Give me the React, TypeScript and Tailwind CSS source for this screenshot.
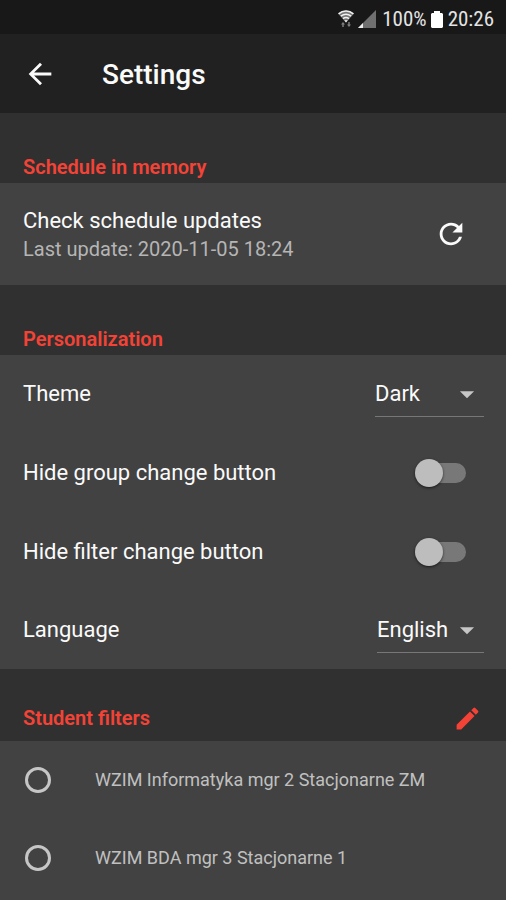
import { ReactNode, useState } from "react";
import { MdArrowBack, MdArrowDropDown, MdEdit, MdRefresh } from "react-icons/md";

const FILTERS = [
  "WZIM Informatyka mgr 2 Stacjonarne ZM",
  "WZIM BDA mgr 3 Stacjonarne 1",
];

function StatusBar() {
  return (
    <div className="flex h-[34px] items-center justify-end bg-[#181818] pr-3 pt-1 font-['Roboto_Condensed','Roboto',sans-serif] text-[21px] leading-6 text-[#e4e4e4]">
      <svg className="mr-1 h-[18px] w-4" viewBox="0 0 16 18" aria-hidden="true">
        <path d="M0 3.500C4.500-.6 11.500-.6 16 3.500L8 12.500z" fill="#777" />
        <g fill="none" stroke="#f0f0f0" strokeWidth="1.500">
          <path d="M.6 3.800C5 .2 11 .2 15.400 3.800" />
          <path d="M2.800 6.200C6 3.700 10 3.700 13.200 6.200" />
          <path d="M5 8.700C7 7.200 9 7.200 11 8.700" />
        </g>
        <path d="M6.200 10.200h3.600L8 12.500z" fill="#f0f0f0" />
        <path d="M3 14.500l2-2.500 2 2.500H5.700V17H4.300v-2.500zM13 14.500L11 17l-2-2.500h1.300V12h1.400v2.500z" fill="#808080" />
      </svg>
      <svg className="mr-1.5 h-[18px] w-[18px]" viewBox="0 0 18 18" aria-hidden="true">
        <path d="M18 0v18H0z" fill="#707070" />
        <path d="M5 13v5H0z" fill="#f0f0f0" />
      </svg>
      <span>100%</span>
      <svg className="ml-1 mr-[5px] h-[17px] w-3" viewBox="0 0 12 17" aria-hidden="true">
        <path d="M3 0h6v2h2l1 1v13l-1 1H1l-1-1V3l1-1h2z" fill="#fff" />
      </svg>
      <span>20:26</span>
    </div>
  );
}

function SectionTitle({ title }: { title: string }) {
  return <h2 className="text-[20px] font-semibold leading-6 text-[#f44336]">{title}</h2>;
}

function SectionHeader({ children }: { children: ReactNode }) {
  return <div className="flex h-[70px] items-end pb-1 pl-[23px]">{children}</div>;
}

type SelectRowProps = { id: string; label: string; options: string[]; width: string };

function SelectRow({ id, label, options, width }: SelectRowProps) {
  return (
    <div className="flex h-[78px] items-center justify-between pl-[23px] pr-[22px]">
      <label htmlFor={id}>{label}</label>
      <div className={`relative border-b border-[#777] ${width}`}>
        <select id={id} className="h-11 w-full appearance-none bg-transparent text-[#fafafa] outline-none">
          {options.map((option) => (
            <option key={option} className="bg-[#424242]">{option}</option>
          ))}
        </select>
        <MdArrowDropDown className="pointer-events-none absolute right-0 top-[5px] size-[34px] text-[#c6c6c6]" />
      </div>
    </div>
  );
}

function SwitchRow({ label }: { label: string }) {
  const [checked, setChecked] = useState(false);

  return (
    <label className="flex h-[79px] items-center justify-between pl-[23px] pr-10">
      {label}
      <span className="relative flex h-7 w-[51px] items-center">
        <input
          type="checkbox"
          role="switch"
          checked={checked}
          onChange={(e) => setChecked(e.target.checked)}
          className="peer ml-1 h-5 w-full appearance-none rounded-full bg-[#787878] checked:bg-[#f44336]/50"
        />
        <span className="pointer-events-none absolute left-0 top-0 size-7 rounded-full bg-[#bdbdbd] shadow-sm shadow-black/50 peer-checked:left-6 peer-checked:bg-[#f44336]" />
      </span>
    </label>
  );
}

function App() {
  const [filter, setFilter] = useState("");

  return (
    <div className="min-h-screen bg-[#303030] font-['Roboto',sans-serif] text-[22px] leading-7 text-[#fafafa]">
      <StatusBar />
      <header className="flex h-[79px] items-center bg-[#212121] pl-[23px]">
        <button type="button" aria-label="Back">
          <MdArrowBack className="size-[34px]" />
        </button>
        <h1 className="ml-[45px] pt-0.5 text-[28px] font-medium leading-8">Settings</h1>
      </header>

      <main>
        <SectionHeader>
          <SectionTitle title="Schedule in memory" />
        </SectionHeader>
        <section className="flex h-[102px] items-center justify-between bg-[#424242] pl-[23px] pr-[38px]">
          <div className="pt-0.5">
            <p>Check schedule updates</p>
            <p className="text-[20px] text-[#b5b5b5]">Last update: 2020-11-05 18:24</p>
          </div>
          <button type="button" aria-label="Refresh">
            <MdRefresh className="size-[34px]" />
          </button>
        </section>

        <SectionHeader>
          <SectionTitle title="Personalization" />
        </SectionHeader>
        <section className="bg-[#424242]">
          <SelectRow id="theme" label="Theme" options={["Dark", "Light"]} width="w-[109px]" />
          <SwitchRow label="Hide group change button" />
          <SwitchRow label="Hide filter change button" />
          <SelectRow id="language" label="Language" options={["English", "Polski"]} width="w-[107px]" />
        </section>

        <div className="flex h-[72px] items-center justify-between pl-[23px] pr-6 pt-[26px]">
          <SectionTitle title="Student filters" />
          <button type="button" aria-label="Edit filters" className="text-[#f44336]">
            <MdEdit className="size-[29px]" />
          </button>
        </div>
        <section className="bg-[#424242] pb-2">
          {FILTERS.map((name) => (
            <label key={name} className="flex h-[78px] items-center pl-[25px] text-[18px] text-[#c0c0c0]">
              <input
                type="radio"
                name="filter"
                value={name}
                checked={filter === name}
                onChange={() => setFilter(name)}
                className="mr-11 size-[26px] appearance-none rounded-full border-3 border-[#c6c6c6] checked:border-8 checked:border-[#f44336]"
              />
              {name}
            </label>
          ))}
        </section>
      </main>
    </div>
  );
}

export default App;
